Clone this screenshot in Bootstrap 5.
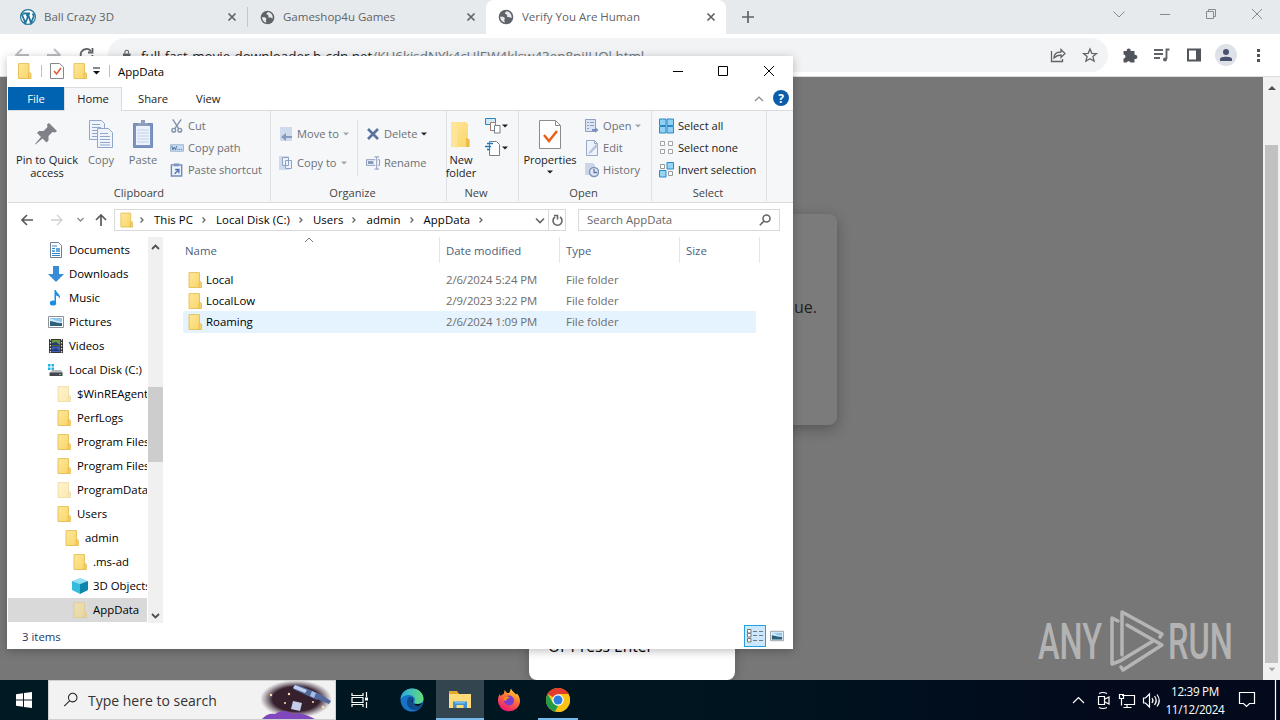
<!DOCTYPE html>
<html lang="en">
<head>
    <meta charset="UTF-8">
    <meta name="viewport" content="width=device-width, initial-scale=1.0">
    <title>AppData</title>
    <link href="https://cdn.jsdelivr.net/npm/bootstrap@5.3.0/dist/css/bootstrap.min.css" rel="stylesheet">
    <style>
        body {
            width: 1280px;
            height: 720px;
            overflow: hidden;
            background: #777;
            color: #000;
            font-family: "Open Sans", "Noto Sans", sans-serif;
            font-size: 11.4px;
            line-height: 16px;
            white-space: nowrap;
        }

        svg {
            display: block;
            flex: none;
        }

        /* Browser */
        .desktop {
            width: 1280px;
            height: 720px;
        }

        .tab-strip {
            height: 34px;
            background: #e7eaed;
            color: #5f6368;
            font-size: 11.5px;
        }

        .browser-tab {
            height: 34px;
            padding-right: 10px;
        }

        .browser-tab.current {
            background: #fff;
            border-radius: 8px 8px 0 0;
        }

        .tool-bar {
            height: 43px;
            background: #fff;
            border-bottom: 1px solid #dcdddf;
        }

        .omnibox {
            height: 34px;
            width: 1000px;
            margin-left: 8px;
            margin-top: 4px;
            border-radius: 17px;
            background: #f1f3f4;
            font-size: 13.4px;
            color: #202124;
        }

        .url-text { padding: 1px 0 0 1px; }

        .web-page {
            background: #777;
        }

        .page-card {
            left: 430px;
            top: 137px;
            width: 407px;
            height: 211px;
            border-radius: 8px;
            background: #7b7b7b;
            box-shadow: 0 4px 14px rgba(0, 0, 0, .28);
            font-size: 16px;
            color: #222;
            padding: 85px 20px 0 0;
        }

        .page-popup {
            left: 529px;
            bottom: 0;
            width: 206px;
            height: 130px;
            border-radius: 8px;
            background: #fff;
            box-shadow: 0 0 12px rgba(0, 0, 0, .25);
            padding: 0 0 26px 19px;
            font-size: 15.6px;
        }

        .page-scroll {
            width: 17px;
            background: #f1f1f1;
        }

        .page-scroll .thumb {
            width: 13px;
            height: 518px;
            background: #c1c1c1;
        }

        /* Explorer window */
        .explorer {
            left: 7px;
            top: 56px;
            width: 786px;
            height: 593px;
            background: #fff;
            padding-left: 1px;
            box-shadow: 0 2px 9px rgba(0, 0, 0, .25);
        }

        .title-row { height: 31px; }
        .title-row .title-text { padding-top: 1px; }
        .ribbon-tabs { height: 24px; border-bottom: 1px solid #dadbdc; color: #222; font-size: 11.2px; }
        .ribbon-tabs > div { padding-top: 1px; }

        .ribbon-tabs .tab-file {
            width: 56px;
            height: 23px;
            background: #0063b1;
            color: #fff;
        }

        .ribbon-tabs .tab-home {
            width: 58px;
            height: 24px;
            background: #f5f6f7;
            border: 1px solid #dadbdc;
            border-bottom: 0;
            padding-top: 0;
        }

        .ribbon {
            height: 92px;
            background: #f5f7f9;
            border-bottom: 1px solid #d8dadc;
            font-size: 11.1px;
            color: #1c1c1c;
        }

        .ribbon-group {
            border-right: 1px solid #dfe1e4;
            height: 90px;
            padding-top: 4px;
        }

        .ribbon-group .group-items { height: 70px; }
        .ribbon-group .group-name { height: 16px; line-height: 16px; color: #444; text-align: center; }
        .g-clipboard { width: 263px; }
        .g-organize { width: 176px; }
        .g-organize .group-items { padding-top: 5px; }
        .g-organize .group-name { padding-right: 12px; }
        .g-new { width: 72px; }
        .g-new .group-name { padding-right: 13px; }
        .g-new .icon-col { margin-left: 10px; }
        .g-new .icon-col .small-btn { gap: 1px; }
        .g-open { width: 133px; }
        .g-open .group-name { padding-right: 3px; }
        .g-select { width: 115px; }
        .g-select .group-items { padding-left: 7px; }
        .g-select .group-name { padding-right: 2px; }

        .big-btn { line-height: 13px; text-align: center; padding-top: 5px; }
        .big-btn svg { margin: 0 auto 4px; }
        .off { color: #6c7075; }
        .small-btn { height: 22px; display: flex; align-items: center; gap: 4px; }
        .g-organize .small-btn { height: 29px; }
        .split { width: 1px; height: 56px; background: #dfe1e4; }
        .tight { letter-spacing: -.05px; }

        .address-row { height: 34px; }
        .address-box, .search-box { height: 22px; border: 1px solid #d9d9d9; }
        .address-box { width: 452px; margin-left: 7px; }
        .address-box .first-chev { margin: 0 9px 0 5px; }
        .address-box .sep-chev { margin: 0 9px 0 8px; }
        .crumb { letter-spacing: .07px; }
        .search-box { width: 202px; margin-left: 12px; color: #666; }

        .nav-tree { width: 139px; height: 384px; overflow: hidden; margin-top: 1px; }
        .tree-row { height: 24px; display: flex; align-items: center; gap: 5px; padding-left: 40px; }
        .tree-row.lv1 { padding-left: 48px; }
        .tree-row.lv2 { padding-left: 56px; }
        .tree-row.lv3 { padding-left: 64px; }
        .tree-row.picked { background: #d9d9d9; }
        .tree-scroll { width: 17px; background: #f0f0f0; border-left: 1px solid #fff; border-right: 1px solid #fff; }
        .tree-scroll .thumb { width: 15px; height: 75px; background: #cdcdcd; }

        .file-list { margin-left: 17px; }
        .list-head { height: 26px; color: #4c607a; margin-bottom: 6px; }
        .list-head > div { border-right: 1px solid #e5e5e5; padding: 6px 0 0 6px; }
        .list-head .col-a { width: 259px; padding-left: 4px; }
        .list-head .col-b { width: 120px; }
        .list-head .col-c { width: 120px; }
        .list-head .col-d { width: 80px; }
        .sort-mark { left: 123px; top: 0; }
        .file-row { width: 573px; height: 21px; display: flex; align-items: center; margin-left: 2px; padding: 1px 0 0 4px; color: #6d6d6d; }
        .file-row.hot { background: #e5f3ff; height: 22px; padding-top: 0; }
        .file-row .fname { width: 243px; padding-left: 3px; color: #000; }
        .file-row .fdate { width: 120px; letter-spacing: -.12px; }
        .status-row { height: 26px; color: #24395e; }
        .status-row .status-text { padding: 1px 0 0 14px; }
        .status-row .last-view { margin: 0 9px 0 4px; }
        .view-on { width: 22px; height: 22px; background: #cce8ff; border: 1px solid #26a0da; }

        /* Watermark */
        .watermark { left: 1036px; top: 608px; }

        /* Taskbar */
        .task-bar { height: 40px; background: linear-gradient(90deg, #001a24, #00141f 60%, #020a1c 85%); color: #fff; }
        .task-search { width: 288px; background: #f2f2f2; border: 1px solid #d0d0d0; color: #333; font-size: 14px; }
        .task-search .search-hint { padding: 1px 0 0 2px; }
        .task-btn { height: 40px; display: flex; align-items: center; justify-content: center; }
        .task-btn.active { background: #33454f; border-bottom: 2px solid #76b9ed; padding-top: 2px; }
        .running { border-bottom: 2px solid #76b9ed; padding-top: 2px; }
        .clock { width: 62px; font-size: 11.7px; line-height: 18px; text-align: center; letter-spacing: -.3px; }
        .notice { margin-left: 14px; }
    </style>
</head>
<body>
    <!-- Shared icons -->
    <svg width="0" height="0" class="position-absolute">
        <defs>
            <linearGradient id="fold" x1="0" x2="1" y2="1"><stop offset="0" stop-color="#ffe79b"/><stop offset="1" stop-color="#f8d668"/></linearGradient>
            <symbol id="i-folder" viewBox="0 0 16 16"><path d="M2 .6h10.500v14.900H2z" fill="url(#fold)" stroke="#e4bd53" stroke-width=".9"/><path d="M12 15.500V10.500l1-1 1.500 1v5z" fill="#f7d36a" stroke="#dfb64c" stroke-width=".8"/></symbol>
            <symbol id="i-globe" viewBox="0 0 16 16"><circle cx="8" cy="8" r="7.300" fill="#5f6368"/><path d="M2.200 7.500c2 .2 4 .3 4.500 1.500.4 1-.7 1.300-.3 2.700l.5 1.800A6 6 0 0 1 2.200 7.500zM8.500 2.200c-.4 1-1.500.8-1.500 2 0 1 1.500.8 2 1.600.5.900-.6 1.500.4 2.200 1 .6 2.300 0 3.300.7l.9.4A6 6 0 0 0 8.500 2.200z" fill="#e7eaed"/></symbol>
            <symbol id="i-x" viewBox="0 0 10 10"><path d="M1.500 1.500l7 7m0-7l-7 7" stroke="#5f6368" stroke-width="1.700"/></symbol>
            <symbol id="i-chev" viewBox="0 0 6 8"><path d="M1.500 1.500L4 4 1.500 6.500" fill="none" stroke="#666" stroke-width="1.300"/></symbol>
            <symbol id="i-caret" viewBox="0 0 6 4"><path d="M0 .5h6L3 3.500z" fill="currentColor"/></symbol>
            <symbol id="i-pic" viewBox="0 0 16 14"><path d="M.5 1.500h15v11H.5z" fill="#fff" stroke="#8b939a"/><path d="M2 3h12v8H2z" fill="#8fc7ef"/><path d="M2 6c3-1 5 3 12 2v3H2z" fill="#2e6078"/><path d="M2 4c3-.5 4 1 7 2l5 1v1L2 6z" fill="#d8edfa"/></symbol>
            <symbol id="i-page" viewBox="0 0 14 16"><path d="M1.500.5h8l3 3v12h-11z" fill="#edf2fb" stroke="#99a8c5"/><path d="M9.500.5v3h3" fill="none" stroke="#99a8c5"/></symbol>
        </defs>
    </svg>

    <div class="desktop position-relative overflow-hidden d-flex flex-column">
        <!-- Browser tabs -->
        <div class="tab-strip d-flex align-items-center">
            <div class="browser-tab d-flex align-items-center ps-3" style="width: 247px">
                <svg class="ms-1" width="16" height="16" viewBox="0 0 16 16"><circle cx="8" cy="8" r="7.400" fill="#fff" stroke="#21759b" stroke-width="1.200"/><path d="M1.800 5l3.500 9L7.800 8 6.500 4.800 6 4.500h4M5 4.500H2.500M8 5l3 9 2.500-6c.6-2-.6-3-1-3.600" fill="none" stroke="#21759b" stroke-width="1.800"/></svg>
                <span class="ms-2">Ball Crazy 3D</span>
                <svg class="ms-auto" width="10" height="10"><use href="#i-x"/></svg>
            </div>
            <div class="vr align-self-center" style="height: 20px"></div>
            <div class="browser-tab d-flex align-items-center ps-2" style="width: 238px">
                <svg class="ms-1" width="15" height="15"><use href="#i-globe"/></svg>
                <span class="ms-2">Gameshop4u Games</span>
                <svg class="ms-auto" width="10" height="10"><use href="#i-x"/></svg>
            </div>
            <div class="browser-tab current d-flex align-items-center ps-2" style="width: 240px">
                <svg class="ms-1" width="16" height="16"><use href="#i-globe"/></svg>
                <span class="ms-2">Verify You Are Human</span>
                <svg class="ms-auto" width="10" height="10"><use href="#i-x"/></svg>
            </div>
            <svg class="ms-3" width="12" height="12" viewBox="0 0 12 12"><path d="M6 0v12M0 6h12" stroke="#5f6368" stroke-width="1.700"/></svg>
            <svg class="ms-auto" width="176" height="34" viewBox="1104 0 176 34" fill="none" stroke="#858a8f"><path d="M1113.500 11.500l5.500 5.500 5.500-5.500M1160 14.500h10M1206.500 11.500h7v7h-7zM1208.500 11.500v-2h7v7h-2M1252 9l10 10m0-10l-10 10"/></svg>
        </div>

        <!-- Address toolbar -->
        <div class="tool-bar d-flex">
            <svg width="100" height="42" viewBox="0 34 100 42" fill="none" stroke-width="1.800"><path d="M29 55H16m6-6l-6 6 6 6M47 55h13m-6-6l6 6-6 6" stroke="#bcbec1"/><path d="M91 51a6 6 0 1 0 1.500 4M92.500 48v4.500H88" stroke="#5f6368"/></svg>
            <div class="omnibox d-flex align-items-center">
                <svg class="ms-2 me-2 ps-1" width="16" height="14" viewBox="-4 0 16 14"><path d="M0 5h10v8H0z" fill="#5f6368"/><path d="M2.500 5V3.200a2.500 2.500 0 0 1 5 0V5" fill="none" stroke="#5f6368" stroke-width="1.400"/></svg>
                <span class="url-text">full-fast-movie-downloader.b-cdn.net<span class="text-secondary">/KH6kisdNYk4cUlEW4klsw43ep8niJHQl.html</span></span>
            </div>
            <svg class="ms-auto position-absolute end-0" width="240" height="42" viewBox="1040 34 240 42" fill="none" stroke="#5f6368" stroke-width="1.300">
                <path d="M1051.500 51v10.500h11V59M1054 58c0-4 3-6 7-6v-2.500l4 4-4 4V55c-3 0-5 1-7 3z"/>
                <path d="M1090 49l1.800 4.300 4.700.3-3.600 3 1.200 4.600-4.100-2.500-4.100 2.500 1.200-4.600-3.600-3 4.700-.3z"/>
                <path d="M1123.500 51h3.300a2 2 0 1 1 3.800 0h3.900v3.800a2.200 2.200 0 1 1 0 4.200v3.500h-4a2.100 2.100 0 0 0-3.800 0h-3.200v-4a2 2 0 0 0 0-4z" fill="#50555b" stroke="none"/>
                <path d="M1154 50h9M1154 54h9M1154 58h6M1166.500 59v-9.500h3" stroke-width="1.800"/><circle cx="1165" cy="59.500" r="2" fill="#5f6368" stroke="none"/>
                <path d="M1188 49.500h12v11h-12z" stroke="#50555b" stroke-width="2"/><path d="M1196 49h5v12h-5z" fill="#50555b" stroke="none"/>
                <circle cx="1226" cy="55" r="11" fill="#dfe1e8" stroke="none"/><circle cx="1226" cy="52" r="3" fill="#4a5272" stroke="none"/><path d="M1220 61v-2c0-3 12-3 12 0v2z" fill="#4a5272" stroke="none"/>
                <path d="M1257 49h3v3h-3zM1257 54h3v3h-3zM1257 59h3v3h-3z" fill="#50555b" stroke="none"/>
            </svg>
        </div>

        <!-- Web page -->
        <div class="web-page flex-grow-1 position-relative d-flex justify-content-end overflow-hidden">
            <div class="page-card position-absolute text-end">to continue.</div>
            <div class="page-popup position-absolute d-flex align-items-end">Or Press Enter</div>
            <div class="page-scroll d-flex flex-column align-items-center justify-content-between pt-1 pb-2">
                <svg class="mt-1" width="8" height="6" viewBox="0 0 8 6"><path d="M0 5l4-4 4 4z" fill="#505050"/></svg>
                <div class="thumb mt-auto mb-1"></div>
                <svg width="8" height="5" viewBox="0 0 8 6"><path d="M0 1l4 4 4-4z" fill="#a3a3a3"/></svg>
            </div>
        </div>

        <!-- Taskbar -->
        <div class="task-bar d-flex align-items-stretch">
            <div class="task-btn" style="width: 48px"><svg width="16" height="16" viewBox="0 0 16 16" fill="#fff"><path d="M0 2.300l7-1v6.300H0zM8 1.100L16 0v7.600H8zM0 8.400h7v6.300l-7-1zM8 8.400h8V16l-8-1.100z"/></svg></div>
            <div class="task-search d-flex align-items-center">
                <svg class="ms-2 ps-1" width="21" height="18" viewBox="-4 0 21 18" fill="none" stroke="#222" stroke-width="1.300"><circle cx="10.500" cy="6" r="5.300"/><path d="M6.600 10L0 16.500"/></svg>
                <span class="ms-2 search-hint">Type here to search</span>
                <svg class="ms-auto" width="74" height="38" viewBox="0 0 74 38">
                    <defs><radialGradient id="space"><stop offset=".65" stop-color="#36202e"/><stop offset="1" stop-color="#5a4a58" stop-opacity="0"/></radialGradient></defs>
                    <ellipse cx="35" cy="18" rx="36" ry="19" fill="url(#space)"/>
                    <path d="M35 3l24 10-3 6-24-11zM59 13l11 7-2 3-12-5z" fill="#53689b"/><path d="M34 4l12 5-2 3-12-5z" fill="#bfd0ee"/><path d="M51 10l4 2-2 5-4-2z" fill="#a6bce6"/>
                    <path d="M32 20l9 2-2 8-9-2z" fill="#c3cdea"/><path d="M1 38c4-5 9-6 13-5 6-5 14-3 18 0 8-2 13 1 22 5z" fill="#8147bd"/>
                    <g fill="#ffe0b0"><circle cx="10" cy="14" r="1.200"/><circle cx="28" cy="13" r="1.200"/><circle cx="24" cy="22" r="1"/><circle cx="62" cy="26" r="1.200"/><circle cx="52" cy="21" r="1"/></g>
                </svg>
            </div>
            <div class="task-btn" style="width: 48px"><svg width="18" height="16" viewBox="0 0 18 16" fill="none" stroke="#fff" stroke-width="1.200"><path d="M1 1v2.500h11V1M1 15v-2.500h11V15M1 5.500h11v5H1zM15.500 0v5M15.500 10v6"/><path d="M14 5.500h3v3h-3z" fill="#fff" stroke="none"/></svg></div>
            <div class="task-btn ps-1" style="width: 52px"><svg width="24" height="24" viewBox="0 0 24 24">
                <defs><linearGradient id="edgeA" x1="0" x2="1"><stop offset="0" stop-color="#28a8e8"/><stop offset="1" stop-color="#64dd78"/></linearGradient></defs>
                <circle cx="12" cy="12" r="11.500" fill="#1673c6"/><path d="M.6 11C1 5 6 .5 12 .5c7 0 11.500 5 11.500 10 0 4-3 5.500-6 5.500-2.500 0-4-1-3-2.500C16 10 13 7 9 7 5 7 2 9 .6 11z" fill="url(#edgeA)"/><path d="M9 9c-4 4-2 12 5 13 4 0 7-2 8-5-4 2-8 1-9.500-2-1-2 1-3 1-4 0-1-2-3-4.500-2z" fill="#114a8b"/><path d="M12.500 11c-1.500 2-.5 5 3 5 3 0 6 0 7.500-2-1 4-7 6-10 1-1-2 0-3-.5-4z" fill="#04131e"/></svg></div>
            <div class="task-btn active" style="width: 48px"><svg width="22" height="20" viewBox="0 0 22 20"><path d="M0 2h8l2 2h12v14H0z" fill="#ffdb79"/><path d="M0 1h8l2 3H0z" fill="#e8a72d"/><path d="M4 18v-6.500h14V18h-3.500v-3h-7v3z" fill="#3f91d3"/><path d="M6 11.500h10v2H6z" fill="#74bdec"/></svg></div>
            <div class="task-btn" style="width: 50px"><svg width="24" height="24" viewBox="0 0 24 24">
                <defs><linearGradient id="fox" x1=".8" x2=".3" y2="1"><stop offset="0" stop-color="#ffe226"/><stop offset=".45" stop-color="#ff7139"/><stop offset="1" stop-color="#ed1376"/></linearGradient></defs>
                <path d="M1 12c0-3 1-5 2-6l.5 2L7 5.500 7.500 2 10 5c1 0 2 0 2.500-.5L14 .5c1 3 4 4 5 6l1-1c2 2 3 5 3 8a11 10.500 0 0 1-22-1.500z" fill="url(#fox)"/><circle cx="12" cy="12.500" r="5" fill="#7b3cd0"/><path d="M7 9c2-1 4-1 6 1-2 0-4 1-4 3-2 0-3-2-2-4z" fill="#ff8a16"/></svg></div>
            <div class="task-btn px-1" style="width: 48px"><div class="task-btn running w-100"><svg width="24" height="24" viewBox="0 0 24 24"><circle cx="12" cy="12" r="12" fill="#fbc116"/><path d="M12 12L1.600 6A12 12 0 0 1 22.400 6z" fill="#e33b2e"/><path d="M1.600 6L7 15l5 3-3 5.600A12 12 0 0 1 1.600 6z" fill="#229b49"/><path d="M12 6h10.400A12 12 0 0 1 12 24l5-9z" fill="#fbc116"/><circle cx="12" cy="12" r="5.700" fill="#fff"/><circle cx="12" cy="12" r="4.500" fill="#2a7de1"/></svg></div></div>
            <svg class="ms-auto align-self-center" width="94" height="40" viewBox="1070 680 94 40" fill="none" stroke="#fff" stroke-width="1.200">
                <path d="M1073 703l5.500-5.500L1084 703M1098.500 696.500h6v8h-6zM1105 699l4-2v7l-4-2M1099 693.500q4-2 8 0M1099 707.500q4 2 8 0"/>
                <path d="M1122 695.500h12.500v9H1124M1127 704.500v3M1123.500 707.500h8M1119.500 694.500h4v4h-4zM1121.500 698.500v7"/>
                <path d="M1143.500 698h2l4-4v13l-4-4h-2zM1152 698q2 2.500 0 5M1154.500 696q3.500 4.500 0 9M1157 694.500q4.500 6 0 12"/>
            </svg>
            <div class="clock align-self-center">12:39 PM<br>11/12/2024</div>
            <svg class="notice align-self-center" width="40" height="40" viewBox="1240 680 40 40" fill="none" stroke="#fff" stroke-width="1.200" overflow="visible"><path d="M1239.500 692.500h15v11h-5l-3 3-3-3h-4zM1275.500 680v40"/></svg>
        </div>

        <!-- Watermark -->
        <svg class="watermark position-absolute" width="206" height="66" viewBox="1036 608 206 66" fill="none" stroke="#b5b5b5" stroke-width="3.500">
            <g fill="#b3b3b3" stroke="none" font-family="Roboto, sans-serif" font-size="50" font-weight="500"><text x="1038" y="659" textLength="64" lengthAdjust="spacingAndGlyphs">ANY</text><text x="1168" y="659" textLength="65" lengthAdjust="spacingAndGlyphs">RUN</text></g>
            <path d="M1118 621l-6-3v46l8-3 33-20M1122 655v-43l40 22-2 3M1127 625l35 20-39 25-2-3" stroke-linejoin="round" stroke-linecap="round"/>
        </svg>

        <!-- Explorer window -->
        <div class="explorer position-absolute d-flex flex-column overflow-hidden">
            <div class="title-row d-flex align-items-center">
                <svg class="ms-2" width="17" height="16"><use href="#i-folder"/></svg>
                <div class="vr ms-2 me-1 align-self-center" style="height: 12px"></div>
                <svg class="ms-1 ps-0" width="14" height="16" viewBox="0 0 14 16"><path d="M.5.5h9l4 3.500v11.500H.5z" fill="#fff" stroke="#888"/><path d="M4 8l2.500 3L11 5" fill="none" stroke="#e2603a" stroke-width="1.700"/></svg>
                <svg class="ms-2" width="16" height="16"><use href="#i-folder"/></svg>
                <svg class="ms-1 me-2" width="9" height="8" viewBox="0 0 9 8"><path d="M1 1h7" stroke="#111"/><path d="M1 4h7L4.500 7.500z" fill="#111"/></svg>
                <div class="vr me-1 align-self-center" style="height: 12px"></div>
                <span class="ms-1 title-text">AppData</span>
                <svg class="ms-auto" width="125" height="30" viewBox="668 56 125 30" fill="none" stroke="#000"><path d="M673 71.500h10M718.500 66.500h9v9h-9zM764 66l10 10m0-10l-10 10"/></svg>
            </div>
            <div class="ribbon-tabs d-flex">
                <div class="tab-file d-flex align-items-center justify-content-center">File</div>
                <div class="tab-home d-flex align-items-center justify-content-center">Home</div>
                <div class="d-flex align-items-center ms-3">Share</div>
                <div class="d-flex align-items-center ms-4 ps-1">View</div>
                <svg class="ms-auto" width="40" height="23" viewBox="753 87 40 23"><path d="M755 101l4-4 4 4" fill="none" stroke="#888" stroke-width="1.200"/><circle cx="781" cy="98" r="8" fill="#0b5cab"/><text x="781" y="102.500" text-anchor="middle" font-weight="700" font-size="12" fill="#fff">?</text></svg>
            </div>

            <div class="ribbon d-flex">
                <div class="ribbon-group g-clipboard">
                    <div class="group-items d-flex">
                        <div class="big-btn" style="width: 78px">
                            <svg width="28" height="29" viewBox="0 0 28 29"><path d="M16 3l8 8-2 1.500-2.500-.5-4 4 0 4.500-2 2-4-4-7 6-.5-.5 6-7-4-4 2-2 4.500 0 4-4-.5-2.500z" fill="#7f8388"/></svg>Pin to Quick<br>access</div>
                        <div class="big-btn off" style="width: 30px">
                            <svg width="26" height="29" viewBox="0 0 26 29" fill="#eef3fc" stroke="#92a5ca"><path d="M1.500.5h12l3 3v16h-15z"/><path d="M4 4.500h8M4 7.500h9M4 10.500h9M4 13.500h9M4 16.500h9"/><path d="M9.500 8.500h11l4 4v15h-15z"/><path d="M12 13.500h8M12 16.500h10M12 19.500h10M12 22.500h10M12 25h10"/></svg>Copy</div>
                        <div class="big-btn off ms-2" style="width: 38px">
                            <svg width="22" height="29" viewBox="0 0 22 29"><path d="M1.500 3.500h19v24h-19z" fill="#7d93bd" stroke="#7189b6"/><path d="M4 6h14v19H4z" fill="#edf3fc"/><path d="M6 3h3V0h4v3h3v3H6z" fill="#8fa0bd"/><path d="M5 10h12M5 13h12M5 16h12M5 19h12M5 22h12" stroke="#c1d0e8"/></svg>Paste</div>
                        <div class="off ms-1">
                            <div class="small-btn ps-1"><svg width="14" height="16" viewBox="0 0 15 16" fill="none" stroke="#8392ab" stroke-width="1.500"><path d="M3 1l6.500 10M12 1L5 11"/><circle cx="4" cy="12.500" r="2"/><circle cx="10.500" cy="12.500" r="2"/></svg>Cut</div>
                            <div class="small-btn ps-1"><svg width="14" height="10" viewBox="0 0 15 10"><path d="M.5 1.500h14v7H.5z" fill="#c8ddf3" stroke="#9cb2cf"/><path d="M2 3l1 4 1.500-3L6 7l1-4M8 6.500h1M10 6.500h1M12 6.500h1" fill="none" stroke="#4e6e9a"/></svg>Copy path</div>
                            <div class="small-btn ps-1"><svg width="14" height="16" viewBox="0 0 15 16"><path d="M1.500 2.500h11v12h-11z" fill="#edf3fc" stroke="#7189b6" stroke-width="1.500"/><path d="M4 1h6v3H4z" fill="#7d93bd"/><path d="M5 12l4-4M5.500 7.500H9.500v4" fill="none" stroke="#5371a8" stroke-width="1.500"/></svg><span class="tight">Paste shortcut</span></div>
                        </div>
                    </div>
                    <div class="group-name">Clipboard</div>
                </div>
                <div class="ribbon-group g-organize">
                    <div class="group-items d-flex off">
                        <div class="ms-2">
                            <div class="small-btn"><svg width="14" height="16" viewBox="0 0 14 16"><path d="M1 1h12v14H1z" fill="#cfdaec"/><path d="M13 10H7V7l-5 4 5 4v-3h6z" fill="#8699be"/></svg>Move to <svg width="6" height="4" opacity=".6"><use href="#i-caret"/></svg></div>
                            <div class="small-btn"><svg width="14" height="16" viewBox="0 0 14 16"><path d="M0 1h10v14H0z" fill="#cfdaec"/><path d="M3.500 2.500h6v8h-6zM6.500 5.500h6v8h-6z" fill="#edf3fc" stroke="#8ea1c7"/></svg>Copy to <svg width="6" height="4" opacity=".6"><use href="#i-caret"/></svg></div>
                        </div>
                        <div class="split ms-2"></div>
                        <div class="ms-2">
                            <div class="small-btn"><svg width="14" height="14" viewBox="0 0 14 14"><path d="M2 2l10 10M12 2L2 12" stroke="#5a729e" stroke-width="2.600"/></svg>Delete <svg class="text-dark" width="6" height="4"><use href="#i-caret"/></svg></div>
                            <div class="small-btn"><svg width="14" height="16" viewBox="0 0 15 16" fill="none" stroke="#8295bb"><path d="M10 4.500H.5v6H10M13 4.500h1.500v6H13M9 1.500h5M9 14.500h5M11.500 1.500v13"/><path d="M2 6h6v3H2z" fill="#8295bb" stroke="none"/></svg>Rename</div>
                        </div>
                    </div>
                    <div class="group-name">Organize</div>
                </div>
                <div class="ribbon-group g-new">
                    <div class="group-items d-flex">
                        <div class="big-btn d-flex flex-column align-items-center" style="width: 28px">
                            <svg width="22" height="29" viewBox="0 0 22 29"><path d="M1 2h15l2 2v15h2v8H1z" fill="url(#fold)"/><path d="M1 2l6 3v23l-6-2z" fill="#ffe59a"/><path d="M16 27V18l3 1v8z" fill="#e9bd48"/></svg><span>New<br>folder</span></div>
                        <div class="icon-col">
                            <div class="small-btn"><svg width="16" height="16" viewBox="0 0 16 16" fill="#fff" stroke="#718090"><path d="M.5.5h10v6H.5z" fill="#cfe9f6" stroke="#2d87b4"/><path d="M5.500 4.500h5v8h-5z" stroke="#a57a70"/><path d="M9.500 7.500h5.500v7.500H9.500z"/></svg><svg width="6" height="4"><use href="#i-caret"/></svg></div>
                            <div class="small-btn"><svg width="16" height="16" viewBox="0 0 16 16" fill="#fff" stroke="#718090"><path d="M4.500 1.500h7l3 3v11h-10z"/><path d="M2 3.500h6M0 6.500h6M2 9.500h3" stroke="#2477b6" stroke-width="1.500"/></svg><svg width="6" height="4"><use href="#i-caret"/></svg></div>
                        </div>
                    </div>
                    <div class="group-name">New</div>
                </div>
                <div class="ribbon-group g-open">
                    <div class="group-items d-flex">
                        <div class="big-btn" style="width: 62px">
                            <svg width="22" height="29" viewBox="0 0 22 29"><path d="M.5.500h16l5 5v23H.5z" fill="#fff" stroke="#8c8c8c"/><path d="M16.500.5v5h5" fill="none" stroke="#8c8c8c"/><path d="M5 15l5 6 8-10" fill="none" stroke="#e8601c" stroke-width="2.500"/></svg><span class="tight">Properties</span><svg class="mt-1" width="6" height="4"><use href="#i-caret"/></svg></div>
                        <div class="off ps-1">
                            <div class="small-btn"><svg width="14" height="16" viewBox="0 0 14 16" fill="#dbe4f3" stroke="#8da0c3"><path d="M.5 1.500h10v12H.5z"/><path d="M2 4.500h2M2 7.500h2M2 10.500h2M5 4.500h4M5 7.500h4"/><path d="M7 11h3V9l3.500 3-3.500 3v-2H7z" fill="#7990bd" stroke="none"/></svg>Open <svg width="6" height="4" opacity=".6"><use href="#i-caret"/></svg></div>
                            <div class="small-btn"><svg width="14" height="16" viewBox="0 0 14 16"><use href="#i-page"/><path d="M4 12l7-8 2 2-7 7-3 1z" fill="#b5c3dd"/></svg>Edit</div>
                            <div class="small-btn"><svg width="14" height="16" viewBox="0 0 14 16"><path d="M0 1h8l2 2v10H0z" fill="#cbd6e8"/><circle cx="9" cy="10" r="4.500" fill="#e2e9f4" stroke="#8194b8" stroke-width="1.500"/><path d="M9 7v3.500h3" fill="none" stroke="#6077a4" stroke-width="1.300"/></svg>History</div>
                        </div>
                    </div>
                    <div class="group-name">Open</div>
                </div>
                <div class="ribbon-group g-select">
                    <div class="group-items">
                        <div class="small-btn"><svg width="15" height="16" viewBox="0 0 15 16" fill="#8fd0f5" stroke="#268bc8"><path d="M.5 1h6.500v6.500H.5zM8 1h6.500v6.500H8zM.5 8.500H7V15H.5zM8 8.500h6.500V15H8z"/></svg>Select all</div>
                        <div class="small-btn"><svg width="15" height="16" viewBox="0 0 15 16" fill="#fff" stroke="#a3a3a3"><path d="M1.500 1.500h4v4h-4zM9.500 1.500h4v4h-4zM1.500 9.500h4v4h-4zM9.500 9.500h4v4h-4z"/></svg>Select none</div>
                        <div class="small-btn"><svg width="15" height="16" viewBox="0 0 15 16" fill="#9ad4f5" stroke="#268bc8"><path d="M8 .5h6.500V7H8zM.5 8.500H7V15H.5z"/><path d="M1.500 2.500h4v4h-4zM9.500 9.500h4v4h-4z" fill="#fff" stroke="#999"/></svg><span class="tight">Invert selection</span></div>
                    </div>
                    <div class="group-name">Select</div>
                </div>
            </div>

            <div class="address-row d-flex align-items-center">
                <svg width="99" height="34" viewBox="8 203 99 34" fill="none" stroke="#5b5b5b" stroke-width="1.700"><path d="M33 220H22m5-5l-5 5 5 5M101 226v-11m-5 5l5-5 5 5"/><path d="M51 220h11m-5-5l5 5-5 5" stroke="#d0d0d0" stroke-width="1.300"/><path d="M77.500 218l3 3 3-3" stroke="#888" stroke-width="1.300"/></svg>
                <div class="address-box d-flex align-items-center">
                    <svg class="ms-1" width="15" height="16"><use href="#i-folder"/></svg>
                    <svg class="first-chev" width="6" height="8"><use href="#i-chev"/></svg><span class="crumb">This PC</span>
                    <svg class="sep-chev" width="6" height="8"><use href="#i-chev"/></svg><span class="crumb">Local Disk (C:)</span>
                    <svg class="sep-chev" width="6" height="8"><use href="#i-chev"/></svg><span class="crumb">Users</span>
                    <svg class="sep-chev" width="6" height="8"><use href="#i-chev"/></svg><span class="crumb">admin</span>
                    <svg class="sep-chev" width="6" height="8"><use href="#i-chev"/></svg><span class="crumb">AppData</span>
                    <svg class="sep-chev" width="6" height="8"><use href="#i-chev"/></svg>
                    <svg class="ms-auto" width="31" height="20" viewBox="535 210 31 20" fill="none" stroke="#666" stroke-width="1.600"><path d="M537 218.500l4 4 4-4"/><path d="M549.500 210v20" stroke="#d9d9d9" stroke-width="1"/><path d="M561 217a4.500 4.500 0 1 1-5 0M555 215.500h3.500v4"/></svg>
                </div>
                <div class="search-box d-flex align-items-center ps-2">
                    <span>Search AppData</span>
                    <svg class="ms-auto me-2" width="12" height="12" viewBox="0 0 12 12" fill="none" stroke="#666" stroke-width="1.600"><circle cx="7.500" cy="4.500" r="3.500"/><path d="M5 7L.8 11.200"/></svg>
                </div>
            </div>

            <div class="d-flex" style="height: 387px">
                <div class="nav-tree">
                    <div class="tree-row"><svg width="16" height="16" viewBox="0 0 16 16"><path d="M2.500.5h8l3 3v12h-11z" fill="#fff" stroke="#708090"/><path d="M4 4h5M4 6.500h3M4 11.500h8M4 13.500h8" stroke="#3285c9"/><path d="M8 6h4v4H8zM4 8h3v2H4z" fill="#67a9dc"/></svg>Documents</div>
                    <div class="tree-row"><svg width="16" height="16" viewBox="0 0 16 16"><path d="M5 0h6v8h5l-8 8-8-8h5z" fill="#388bd8"/></svg>Downloads</div>
                    <div class="tree-row"><svg width="16" height="16" viewBox="0 0 16 16"><ellipse cx="5" cy="13" rx="3.200" ry="2.600" fill="#1c8fe0"/><path d="M6.500 0H8c0 3 5 4 4 9-1-3-3-3-4-3.500V13H6.500z" fill="#1c8fe0"/></svg>Music</div>
                    <div class="tree-row"><svg width="16" height="14"><use href="#i-pic"/></svg>Pictures</div>
                    <div class="tree-row"><svg width="16" height="16" viewBox="0 0 16 16"><path d="M1 1h14v14H1z" fill="#333"/><path d="M4 2h8v5.500H4z" fill="#6b9a44"/><path d="M4 8.500h8V14H4z" fill="#3e5fc0"/><path d="M4 5l4-1 4 3H4zM4 12l4-2 4 3H4z" fill="#273a75"/><path d="M2.500 1v14M13.500 1v14" stroke="#ddd" stroke-width="1.200" stroke-dasharray="1.500"/></svg>Videos</div>
                    <div class="tree-row"><svg width="16" height="16" viewBox="0 0 16 16"><path d="M0 2h2.500v2.500H0zM3.500 2H6v2.500H3.500zM0 5.500h2.500V8H0zM3.500 5.500H6V8H3.500z" fill="#1cb3e8"/><path d="M4 8h9l2 3H2z" fill="#b8bcc0"/><path d="M1.500 10.500h13V14h-13z" fill="#43484c"/><path d="M11 12h2v1h-2z" fill="#72d26a"/></svg>Local Disk (C:)</div>
                    <div class="tree-row lv1"><svg width="16" height="16" opacity=".5"><use href="#i-folder"/></svg>$WinREAgent</div>
                    <div class="tree-row lv1"><svg width="16" height="16"><use href="#i-folder"/></svg>PerfLogs</div>
                    <div class="tree-row lv1"><svg width="16" height="16"><use href="#i-folder"/></svg>Program Files</div>
                    <div class="tree-row lv1"><svg width="16" height="16"><use href="#i-folder"/></svg>Program Files</div>
                    <div class="tree-row lv1"><svg width="16" height="16" opacity=".5"><use href="#i-folder"/></svg>ProgramData</div>
                    <div class="tree-row lv1"><svg width="16" height="16"><use href="#i-folder"/></svg>Users</div>
                    <div class="tree-row lv2"><svg width="16" height="16"><use href="#i-folder"/></svg>admin</div>
                    <div class="tree-row lv3"><svg width="16" height="16"><use href="#i-folder"/></svg>.ms-ad</div>
                    <div class="tree-row lv3"><svg width="16" height="16" viewBox="0 0 16 16"><path d="M0 3l8-3 8 3-8 3z" fill="#8fe0f3"/><path d="M0 3l8 3v10l-8-4z" fill="#35bcdc"/><path d="M16 3L8 6v10l8-4z" fill="#0b86ad"/></svg>3D Objects</div>
                    <div class="tree-row lv3 picked"><svg width="16" height="16" opacity=".5"><use href="#i-folder"/></svg>AppData</div>
                </div>
                <div class="tree-scroll d-flex flex-column align-items-center">
                    <svg width="15" height="150" viewBox="0 0 15 150"><path d="M4 12l3.500-3.500L11 12" fill="none" stroke="#505050" stroke-width="1.800"/></svg>
                    <div class="thumb"></div>
                    <svg class="mt-auto" width="15" height="16" viewBox="0 0 15 16"><path d="M4 7l3.500 3.500L11 7" fill="none" stroke="#505050" stroke-width="1.800"/></svg>
                </div>
                <div class="file-list">
                    <div class="list-head d-flex position-relative">
                        <div class="col-a">Name</div>
                        <div class="col-b">Date modified</div>
                        <div class="col-c">Type</div>
                        <div class="col-d">Size</div>
                        <svg class="sort-mark position-absolute" width="10" height="6" viewBox="0 0 10 6"><path d="M1 5l4-4 4 4" fill="none" stroke="#777"/></svg>
                    </div>
                    <div class="file-row"><svg width="16" height="16"><use href="#i-folder"/></svg><span class="fname">Local</span><span class="fdate">2/6/2024 5:24 PM</span><span>File folder</span></div>
                    <div class="file-row"><svg width="16" height="16"><use href="#i-folder"/></svg><span class="fname">LocalLow</span><span class="fdate">2/9/2023 3:22 PM</span><span>File folder</span></div>
                    <div class="file-row hot"><svg width="16" height="16"><use href="#i-folder"/></svg><span class="fname">Roaming</span><span class="fdate">2/6/2024 1:09 PM</span><span>File folder</span></div>
                </div>
            </div>

            <div class="status-row d-flex align-items-center">
                <span class="status-text">3 items</span>
                <div class="view-on ms-auto d-flex align-items-center justify-content-center"><svg width="16" height="14" viewBox="0 0 16 14" fill="#fff" stroke="#777"><path d="M.5.5h3.500v3.500H.5zM.5 4.500H4V8H.5zM.5 9.500H4V13H.5zM6 2.500h4M12 2.500h4M6 6.500h4M12 6.500h4M6 11.500h4M12 11.500h4"/></svg></div>
                <svg class="last-view" width="14" height="12"><use href="#i-pic"/></svg>
            </div>
        </div>
    </div>

    <script src="https://cdn.jsdelivr.net/npm/bootstrap@5.3.0/dist/js/bootstrap.bundle.min.js"></script>
</body>
</html>
